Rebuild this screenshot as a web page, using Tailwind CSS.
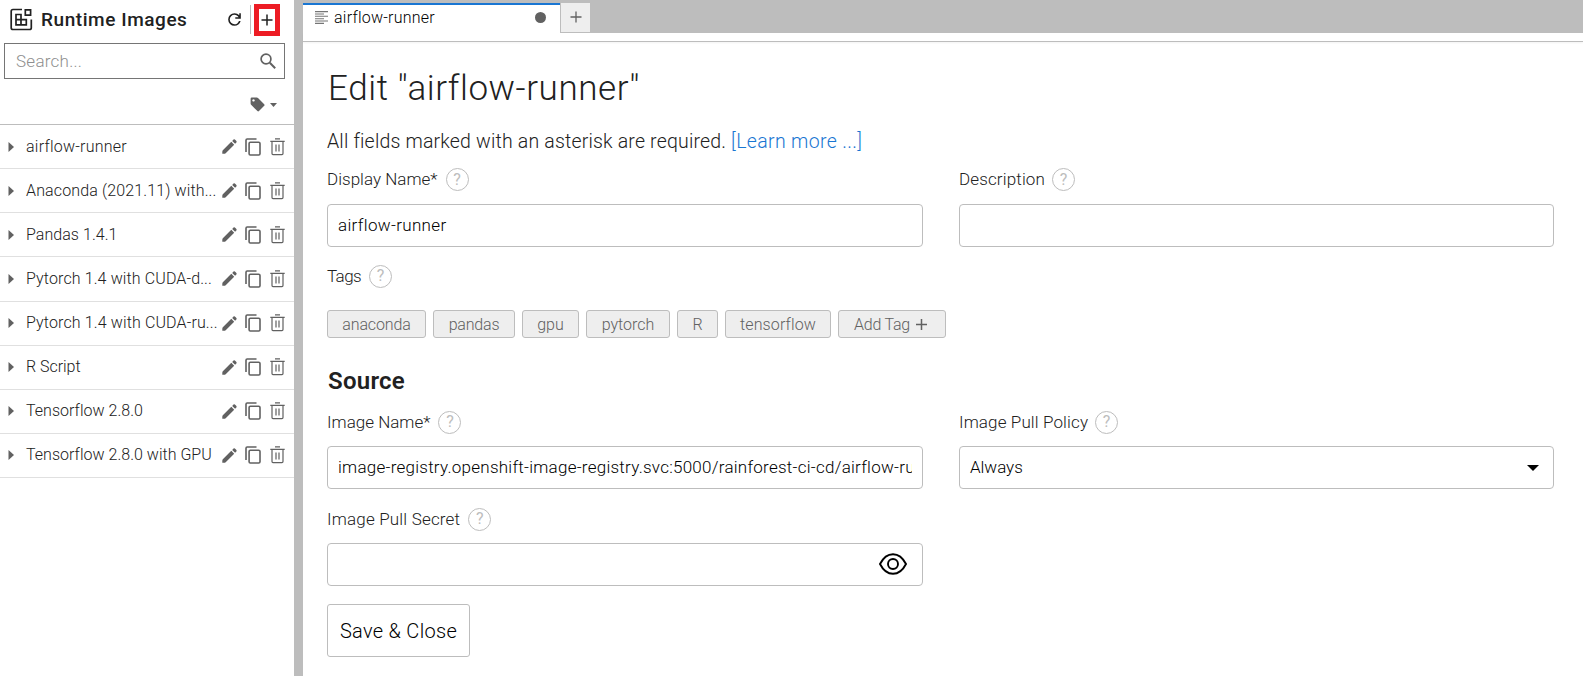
<!DOCTYPE html>
<html lang="en">
<head>
<meta charset="utf-8">
<title>Runtime Images</title>
<script src="https://cdn.jsdelivr.net/npm/@tailwindcss/browser@4"></script>
</head>
<body class="bg-white font-[Roboto,sans-serif] text-[#212121]">
<svg class="hidden">
  <symbol id="pencil" viewBox="0 0 15 15"><path fill="#616161" d="M.8 11.300L9.300 2.800L12.200 5.700L3.700 14.200Q3 14.700 2 14.700H.3V13Q.3 11.800 .8 11.300ZM10.200 1.900L11.500 .6Q12.200 .1 12.900 .6L14.400 2.100Q14.900 2.800 14.400 3.500L13.100 4.800Z"/></symbol>
  <symbol id="copy" viewBox="0 0 16 18"><path fill="none" stroke="#616161" stroke-width="1.600" d="M1 14V2.200Q1 1 2.200 1H11.500M5.300 4.200H13.700Q15 4.200 15 5.400V15.800Q15 17 13.700 17H5.300Q4.100 17 4.100 15.800V5.400Q4.100 4.200 5.300 4.200Z"/></symbol>
  <symbol id="trash" viewBox="0 0 15 18"><path fill="none" stroke="#616161" stroke-width="1.200" d="M5 .8H10M.3 3.300H14.700M2 3.300V15.600Q2 16.600 3 16.600H12Q13 16.600 13 15.600V3.300M6 6.500V13.500M9 6.500V13.500"/></symbol>
</svg>
<div class="flex h-[676px] w-[1583px] overflow-hidden">
  <aside class="flex h-full w-[294px] shrink-0 flex-col">
    <header class="flex h-[39px] shrink-0 items-center pl-[10px]">
      <svg class="h-[23px] w-[23px]" viewBox="0 0 23 23" fill="none" stroke="#212121" stroke-width="1.700"><path d="M12 1.500H3Q1.200 1.500 1.200 3.300V19.700Q1.200 21.500 3 21.500H19.500Q21.300 21.500 21.300 19.700V11.500"/><path d="M6 6.500H11V16.800H6ZM6 11.700H16.300V16.800H11M15.300 1.800H20.600V7.100H15.300Z"/></svg>
      <h1 class="mt-px ml-2 w-[186px] whitespace-nowrap text-[19px] font-medium tracking-[0.560px]">Runtime Images</h1>
      <svg class="-ml-[2px] h-[19px] w-[19px]" viewBox="0 0 24 24"><path fill="#212121" d="M12 20q-3.350 0-5.675-2.325T4 12q0-3.350 2.325-5.675T12 4q1.725 0 3.300.712T18 6.750V4h2v7h-7V9h4.200q-.8-1.400-2.188-2.200T12 6Q9.500 6 7.750 7.750T6 12q0 2.500 1.750 4.250T12 18q1.925 0 3.475-1.100T17.650 14h2.100q-.7 2.650-2.850 4.325T12 20Z"/></svg>
      <div class="ml-[6px] h-[29px] w-px bg-[#bdbdbd]"></div>
      <button class="ml-[3px] flex h-[32px] w-[26px] items-center justify-center border-[5px] border-[#ed1c24]">
        <svg class="-ml-px h-3 w-3 shrink-0" viewBox="0 0 12 12"><path stroke="#212121" stroke-width="1.500" d="M6 .5V11.500M.5 6H11.500"/></svg>
      </button>
    </header>
    <div class="ml-1 mt-1 flex h-[36px] w-[281px] shrink-0 items-center justify-between border border-[#757575] pl-[11px] pr-2">
      <span class="mt-px text-[17px] font-light tracking-[0.260px] text-[#8f8f8f]">Search...</span>
      <svg class="-mt-px h-4 w-4" viewBox="0 0 16 16" fill="none" stroke="#616161"><circle cx="6" cy="6" r="4.900" stroke-width="1.700"/><path stroke-width="2" d="M9.800 9.800L15.200 15.200"/></svg>
    </div>
    <div class="flex h-[46px] shrink-0 items-center gap-[6px] border-b border-[#bdbdbd] pl-[250px] pt-[5px]">
      <svg class="h-[15px] w-[15px]" viewBox="0 0 15 15"><path fill="#616161" fill-rule="evenodd" d="M1.800.5H6.800Q7.500.5 8 1L14.200 7.200Q15 8 14.200 8.800L9 14.100Q8.200 14.800 7.400 14.100L1.100 7.700Q.6 7.200.6 6.500V1.700Q.6.500 1.800.500ZM3.500 2.200a1.200 1.200 0 1 0 .01 0Z"/></svg>
      <svg class="-ml-px mt-px h-1 w-[7px]" viewBox="0 0 7 4"><path fill="#616161" d="M0 0H7L3.500 4Z"/></svg>
    </div>
    <ul id="list"></ul>
  </aside>
  <div class="w-[9px] shrink-0 bg-[#bdbdbd]"></div>
  <main class="flex min-w-0 grow flex-col">
    <div class="flex h-[33px] shrink-0 items-start bg-[#bdbdbd] pt-[3px]">
      <div class="flex h-[30px] w-[257px] items-center border-t-2 border-[#1976d2] bg-white pl-3 pr-[14px] text-black">
        <svg class="-mt-[3px] h-[13px] w-[13px]" viewBox="0 0 13 13"><path stroke="#757575" stroke-width="1.100" d="M0 .6H13M0 3H9M0 5.300H13M0 7.700H9M0 10H13M0 12.400H9"/></svg>
        <span class="-mt-[2px] ml-[6px] text-[16px] font-[350] tracking-[0.240px]">airflow-runner</span>
        <div class="-mt-[3px] ml-auto size-[11px] rounded-full bg-[#616161]"></div>
      </div>
      <div class="flex h-[30px] w-[30px] items-center justify-center border-b border-l border-[#bdbdbd] bg-[#eeeeee]">
        <svg class="-mt-px h-3 w-3" viewBox="0 0 12 12"><path stroke="#616161" stroke-width="1.300" d="M6 .5V11.500M.5 6H11.500"/></svg>
      </div>
    </div>
    <div class="h-[9px] shrink-0 border-b border-[#bdbdbd] shadow-xs"></div>
    <section class="flex flex-col items-start pl-6 font-[350]">
      <h2 class="mt-[27px] ml-px h-[40px] whitespace-nowrap text-[35px] leading-[40px] font-[350] tracking-[0.580px]">Edit "airflow-runner"</h2>
      <p class="mt-5 h-[26px] whitespace-nowrap text-[19.500px] leading-[26px] tracking-[0.180px]"><span>All fields marked with an asterisk are required.</span> <a class="tracking-[0.350px] text-[#1976d2]">[Learn more ...]</a></p>

      <div class="flex gap-9">
        <div class="w-[596px]">
          <label class="mt-[13px] flex h-6 items-center gap-2 text-[17px] tracking-[0.020px]"><span>Display Name*</span><b class="-mt-px flex size-[23px] items-center justify-center rounded-full border border-[#bdbdbd] text-[16px] font-normal tracking-normal text-[#bdbdbd]">?</b></label>
          <div class="mt-3 flex h-[43px] items-center rounded-[4px] border border-[#bdbdbd] px-[10px] text-[17px] text-black tracking-[0.340px]">airflow-runner</div>
        </div>
        <div class="w-[595px]">
          <label class="mt-[13px] flex h-6 items-center gap-[7px] text-[17px]"><span class="tracking-[0.140px]">Description</span><b class="-mt-px flex size-[23px] items-center justify-center rounded-full border border-[#bdbdbd] text-[16px] font-normal text-[#bdbdbd]">?</b></label>
          <div class="mt-3 h-[43px] rounded-[4px] border border-[#bdbdbd]"></div>
        </div>
      </div>

      <label class="mt-[17px] flex h-6 items-center gap-2 text-[17px] tracking-[-0.600px]"><span class="mt-px">Tags</span><b class="flex size-[23px] items-center justify-center rounded-full border border-[#bdbdbd] text-[16px] font-normal tracking-normal text-[#bdbdbd]">?</b></label>
      <div class="mt-[22px] flex h-7 gap-[7px] text-[16px] font-light text-[#616161] *:flex *:items-center *:justify-center *:rounded-[3px] *:border *:border-[#bdbdbd] *:bg-[#eeeeee] *:pt-[2px]">
        <span class="w-[99px] tracking-[-0.130px]">anaconda</span>
        <span class="w-[82px] tracking-[-0.180px]">pandas</span>
        <span class="w-[57px]">gpu</span>
        <span class="w-[84px]">pytorch</span>
        <span class="w-[41px]">R</span>
        <span class="w-[106px] tracking-[0.120px]">tensorflow</span>
        <span class="w-[108px] gap-[6px] tracking-[-0.200px]">Add Tag<svg class="-mt-px mr-[3px] h-[11px] w-[11px]" viewBox="0 0 11 11"><path stroke="#616161" stroke-width="1.500" d="M5.500 0V11M0 5.500H11"/></svg></span>
      </div>

      <h3 class="mt-[27px] ml-px h-8 text-[24px] leading-8 font-semibold tracking-[0.260px]">Source</h3>

      <div class="flex gap-9">
        <div class="w-[596px]">
          <label class="mt-[13px] flex h-6 items-center gap-2 text-[17px] tracking-[0.010px]"><span class="mt-px">Image Name*</span><b class="flex size-[23px] items-center justify-center rounded-full border border-[#bdbdbd] text-[16px] font-normal tracking-normal text-[#bdbdbd]">?</b></label>
          <div class="mt-3 flex h-[43px] items-center rounded-[4px] border border-[#bdbdbd] px-[10px] text-[17px] text-black tracking-[0.255px]"><span class="mt-px overflow-hidden whitespace-nowrap">image-registry.openshift-image-registry.svc:5000/rainforest-ci-cd/airflow-runner</span></div>
        </div>
        <div class="w-[595px]">
          <label class="mt-[13px] flex h-6 items-center gap-[7px] text-[17px]"><span class="mt-px tracking-[0.120px]">Image Pull Policy</span><b class="flex size-[23px] items-center justify-center rounded-full border border-[#bdbdbd] text-[16px] font-normal text-[#bdbdbd]">?</b></label>
          <div class="mt-3 flex h-[43px] items-center justify-between rounded-[4px] border border-[#bdbdbd] pl-[10px] pr-[14px] text-[17px] text-black tracking-[-0.040px]"><span class="mt-px">Always</span><svg class="h-[6px] w-3" viewBox="0 0 12 6"><path d="M0 0H12L6 6Z"/></svg></div>
        </div>
      </div>

      <label class="mt-[18px] flex h-6 items-center gap-2 text-[17px] tracking-[0.180px]"><span class="mt-px">Image Pull Secret</span><b class="flex size-[23px] items-center justify-center rounded-full border border-[#bdbdbd] text-[16px] font-normal tracking-normal text-[#bdbdbd]">?</b></label>
      <div class="mt-3 flex h-[43px] w-[596px] items-center justify-end rounded-[4px] border border-[#bdbdbd] pr-[15px]">
        <svg class="-mt-px h-[22px] w-[28px]" viewBox="0 0 28 22" fill="none" stroke="#000" stroke-width="1.900"><path d="M1 11Q6 1.200 14 1.200T27 11Q22 20.800 14 20.800T1 11Z"/><circle cx="14" cy="11" r="5"/></svg>
      </div>
      <button class="mt-[18px] h-[53px] w-[143px] rounded-[3px] border border-[#bdbdbd] text-[20px] font-[350] text-black tracking-[0.300px]">Save &amp; Close</button>
    </section>
  </main>
</div>
<script>
const rows = [
  ["airflow-runner", "tracking-[0.240px]"],
  ["Anaconda (2021.11) with...", "tracking-[0.130px]"],
  ["Pandas 1.4.1", "tracking-[0.050px]"],
  ["Pytorch 1.4 with CUDA-d...", "tracking-[0.120px]"],
  ["Pytorch 1.4 with CUDA-ru...", "tracking-[0.130px]"],
  ["R Script", "tracking-[-0.040px]"],
  ["Tensorflow 2.8.0", "tracking-[0.020px]"],
  ["Tensorflow 2.8.0 with GPU", "tracking-[0.020px]"]
];
document.getElementById("list").innerHTML = rows.map(([name, spacing]) => `
  <li class="flex h-[44.125px] items-center border-b border-[#e0e0e0] pl-2">
    <svg class="h-[10px] w-[6px] shrink-0" viewBox="0 0 6 10"><path fill="#616161" d="M.5 0L6 5L.5 10Z"/></svg>
    <span class="ml-3 w-[196px] shrink-0 whitespace-nowrap text-[16px] font-[350] ${spacing}">${name}</span>
    <svg class="h-[15px] w-[15px] shrink-0"><use href="#pencil"/></svg>
    <svg class="ml-2 h-[18px] w-4 shrink-0"><use href="#copy"/></svg>
    <svg class="ml-[9px] h-[18px] w-[15px] shrink-0"><use href="#trash"/></svg>
  </li>`).join("");
</script>
</body>
</html>
